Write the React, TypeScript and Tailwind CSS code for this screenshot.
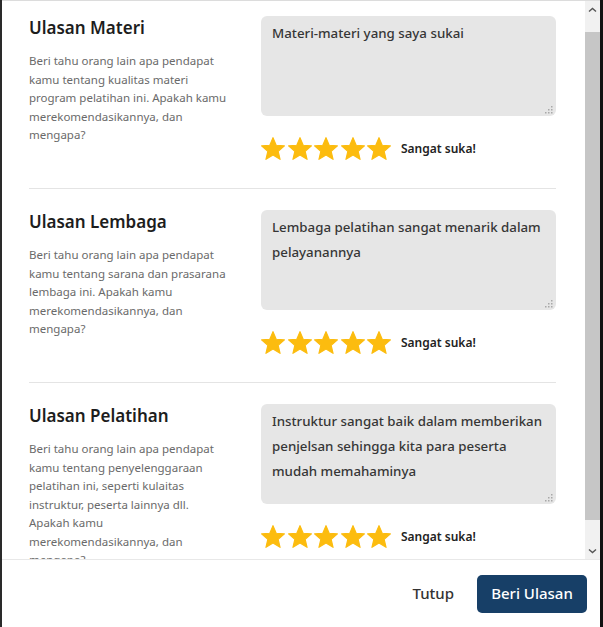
import React from "react";

type Section = {
  title: string;
  desc: string[];
  text: string[];
  last?: boolean;
};

const sections: Section[] = [
  {
    title: "Ulasan Materi",
    desc: [
      "Beri tahu orang lain apa pendapat",
      "kamu tentang kualitas materi",
      "program pelatihan ini. Apakah kamu",
      "merekomendasikannya, dan",
      "mengapa?",
    ],
    text: ["Materi-materi yang saya sukai"],
  },
  {
    title: "Ulasan Lembaga",
    desc: [
      "Beri tahu orang lain apa pendapat",
      "kamu tentang sarana dan prasarana",
      "lembaga ini. Apakah kamu",
      "merekomendasikannya, dan",
      "mengapa?",
    ],
    text: ["Lembaga pelatihan sangat menarik dalam", "pelayanannya"],
  },
  {
    title: "Ulasan Pelatihan",
    desc: [
      "Beri tahu orang lain apa pendapat",
      "kamu tentang penyelenggaraan",
      "pelatihan ini, seperti kulaitas",
      "instruktur, peserta lainnya dll.",
      "Apakah kamu",
      "merekomendasikannya, dan",
      "mengapa?",
    ],
    text: [
      "Instruktur sangat baik dalam memberikan",
      "penjelsan sehingga kita para peserta",
      "mudah memahaminya",
    ],
    last: true,
  },
];

function Star() {
  return (
    <svg width="24" height="23" viewBox="1.5 1.5 21 20" className="block">
      <path
        d="M12 17.27 18.18 21l-1.64-7.03L22 9.24l-7.19-.61L12 2 9.19 8.63 2 9.24l5.46 4.73L5.82 21z"
        fill="#fcbc0f"
        stroke="#fcbc0f"
        strokeWidth="1"
        strokeLinejoin="round"
      />
    </svg>
  );
}

function Grip() {
  return (
    <svg
      width="8"
      height="8"
      viewBox="0 0 8 8"
      className="absolute right-[3px] bottom-[2px]"
    >
      {[
        [6, 0],
        [3, 3],
        [6, 3],
        [0, 6],
        [3, 6],
        [6, 6],
      ].map(([x, y], i) => (
        <rect key={i} x={x} y={y} width="1.5" height="1.5" fill="#a8a8a8" />
      ))}
    </svg>
  );
}

function ReviewSection({ s, first }: { s: Section; first: boolean }) {
  return (
    <div
      className={`flex justify-between ${first ? "pt-[15px]" : "pt-[21px]"} ${
        s.last ? "" : "pb-[28px] border-b border-[#e4e4e4]"
      }`}
    >
      <div className="w-[212px]">
        <div className="mt-[1px] text-[17px] leading-[22px] font-semibold text-[#1d1d1d] whitespace-nowrap">
          {s.title}
        </div>
        <div className="mt-[13px] text-[11.5px] leading-[18.5px] text-[#6a6a6a]">
          {s.desc.map((l, i) => (
            <div key={i} className="whitespace-nowrap">
              {l}
            </div>
          ))}
        </div>
      </div>
      <div className="w-[295px]">
        <div className="relative h-[100px] rounded-[6px] bg-[#e6e6e6] pt-[5px] pl-[11px] text-[13.3px] leading-[25px] font-medium text-[#363636]">
          {s.text.map((l, i) => (
            <div key={i} className="whitespace-nowrap">
              {l}
            </div>
          ))}
          <Grip />
        </div>
        <div className="mt-[21px] flex items-center h-[23px]">
          <div className="flex gap-[2.5px]">
            <Star />
            <Star />
            <Star />
            <Star />
            <Star />
          </div>
          <span className="ml-[10px] text-[12px] font-semibold text-[#222]">
            Sangat suka!
          </span>
        </div>
      </div>
    </div>
  );
}

function Chevron({ down }: { down?: boolean }) {
  return (
    <svg width="9" height="6" viewBox="0 0 9 6" className="block">
      <path
        d={down ? "M1 1.5 L4.5 4.5 L8 1.5" : "M1 4.5 L4.5 1.5 L8 4.5"}
        fill="none"
        stroke="#555"
        strokeWidth="1.4"
      />
    </svg>
  );
}

export default function App() {
  return (
    <div className="w-[603px] h-[627px] flex bg-[#151515] overflow-hidden font-['Noto_Sans',sans-serif]">
      <div className="w-[2px] bg-[#2a2a2a]" />
      <div className="flex-1 flex flex-col bg-white border-t border-[#dcdcdc]">
        <div className="flex h-[558px]">
          <div className="flex-1 overflow-hidden pl-[27px] pr-[29px]">
            {sections.map((s, i) => (
              <ReviewSection key={i} s={s} first={i === 0} />
            ))}
          </div>
          <div className="w-[15px] bg-[#f1f1f1] flex flex-col">
            <div className="h-[17px] flex items-center justify-center">
              <Chevron />
            </div>
            <div className="h-[14px]" />
            <div className="h-[488px] bg-[#c6c6c6]" />
            <div className="flex-1" />
            <div className="h-[17px] flex items-center justify-center">
              <Chevron down />
            </div>
          </div>
        </div>
        <div className="flex-1 border-t border-[#e8e8e8] flex items-center justify-end pr-[13px] gap-[23px]">
          <span className="text-[15px] font-medium text-[#333]">Tutup</span>
          <button className="w-[110px] h-[38px] rounded-[5px] bg-[#173f67] text-white text-[15px] font-medium">
            Beri Ulasan
          </button>
        </div>
      </div>
      <div className="w-[3px] bg-[#111]" />
    </div>
  );
}
